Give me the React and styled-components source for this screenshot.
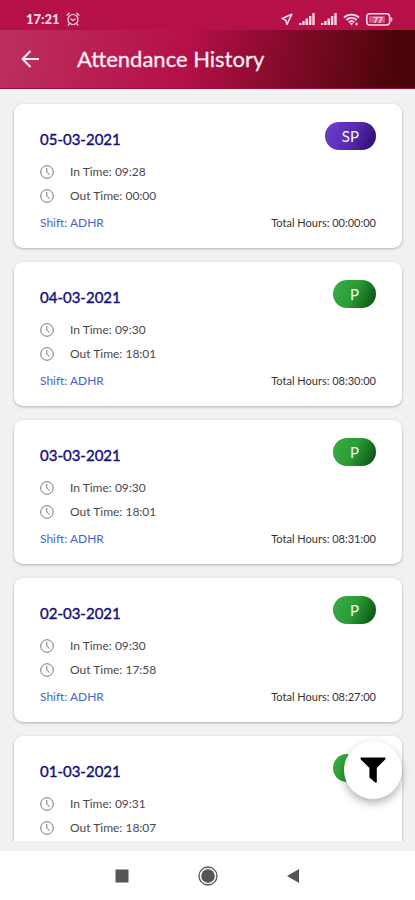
import React from "react";
import styled, { createGlobalStyle } from "styled-components";

const records = [
  { date: "05-03-2021", inTime: "09:28", outTime: "00:00", shift: "ADHR", total: "00:00:00", status: "SP" },
  { date: "04-03-2021", inTime: "09:30", outTime: "18:01", shift: "ADHR", total: "08:30:00", status: "P" },
  { date: "03-03-2021", inTime: "09:30", outTime: "18:01", shift: "ADHR", total: "08:31:00", status: "P" },
  { date: "02-03-2021", inTime: "09:30", outTime: "17:58", shift: "ADHR", total: "08:27:00", status: "P" },
  { date: "01-03-2021", inTime: "09:31", outTime: "18:07", status: "P" },
];

const badgeColors = {
  SP: "linear-gradient(115deg, #6f40cb 0%, #5a2cb4 50%, #2a0a68 100%)",
  P: "linear-gradient(115deg, #3aad45 0%, #2a9a35 50%, #07470f 100%)",
};

const GlobalStyle = createGlobalStyle`
  * {
    box-sizing: border-box;
  }

  body {
    margin: 0;
    font-family: Lato, "Open Sans", sans-serif;
    background: #f1f1f1;
  }
`;

const Screen = styled.div`
  display: flex;
  flex-direction: column;
  height: 100vh;
`;

const StatusBar = styled.div`
  display: flex;
  align-items: center;
  justify-content: space-between;
  height: 30px;
  padding: 8px 22px 0 26px;
  background: #b61049;
  color: #fbdce6;
`;

const StatusGroup = styled.div`
  display: flex;
  align-items: center;
  gap: 6px;
`;

const Clock = styled.span`
  font-size: 13px;
  font-weight: 900;
  line-height: 16px;
`;

const Header = styled.header`
  display: flex;
  align-items: center;
  gap: 35px;
  height: 59px;
  padding: 0 20px;
  border-bottom: 1px solid #9c0d3e;
  background: linear-gradient(100deg, #bd2f60 0%, #b51048 45%, #480406 96%);
`;

const BackButton = styled.button`
  display: flex;
  padding: 0;
  border: 0;
  background: none;
  color: #ffeef3;
`;

const Title = styled.h1`
  margin: 0;
  font-size: 22px;
  font-weight: 400;
  line-height: 28px;
  color: #ffeef3;
  -webkit-text-stroke: 0.3px #ffeef3;
`;

const Content = styled.main`
  position: relative;
  flex: 1;
  min-height: 0;
  padding-bottom: 10px;
`;

const List = styled.ul`
  display: flex;
  flex-direction: column;
  gap: 14px;
  height: 100%;
  margin: 0;
  padding: 15px 13px 0 14px;
  overflow-y: auto;
  scrollbar-width: none;
  list-style: none;
`;

const Card = styled.li`
  flex: none;
  padding: 18px 26px 15px;
  border-radius: 9px;
  background: #fff;
  box-shadow: 0 1px 3px rgba(0, 0, 0, 0.28);
`;

const CardHead = styled.div`
  display: flex;
  align-items: flex-end;
  justify-content: space-between;
  margin-bottom: 10px;
`;

const DateText = styled.h2`
  margin: 0;
  font-size: 15px;
  font-weight: 400;
  line-height: 22px;
  color: #15107a;
  -webkit-text-stroke: 0.4px #15107a;
`;

const Badge = styled.span`
  padding: 0 17px;
  border-radius: 14px;
  font-size: 15px;
  line-height: 28px;
  color: #eefbee;
  background: ${props => badgeColors[props.$status]};
`;

const TimeRow = styled.div`
  display: flex;
  align-items: center;
  gap: 16px;
  font-size: 12px;
  line-height: 24px;
  color: #4a4a4a;
`;

const CardFoot = styled.div`
  display: flex;
  align-items: center;
  justify-content: space-between;
  margin-top: 5px;
  line-height: 20px;
`;

const Shift = styled.span`
  font-size: 12px;
  color: #4a62cc;
`;

const Total = styled.span`
  font-size: 11px;
  color: #333;
`;

const FilterButton = styled.button`
  position: absolute;
  right: 13px;
  bottom: 52px;
  display: flex;
  align-items: center;
  justify-content: center;
  width: 58px;
  height: 58px;
  padding: 0;
  border: 0;
  border-radius: 50%;
  background: #fff;
  box-shadow: 0 4px 8px rgba(0, 0, 0, 0.3);
`;

const NavBar = styled.nav`
  display: flex;
  align-items: center;
  justify-content: center;
  gap: 64px;
  height: 49px;
  background: #fff;
`;

const NavButton = styled.button`
  display: flex;
  padding: 0;
  border: 0;
  background: none;
`;

const AlarmIcon = () => (
  <svg width="14" height="14" viewBox="0 0 14 14" fill="none" stroke="currentColor" strokeWidth="1.2" strokeLinecap="round">
    <circle cx="7" cy="7.5" r="5" />
    <path d="M5 7l2 1.6L9 7M1 3.2L3.2 1.2M13 3.2L10.8 1.2M3.2 11.8L2.2 13M10.8 11.8l1 1.2" />
  </svg>
);

const LocationIcon = () => (
  <svg width="13" height="13" viewBox="0 0 13 13" fill="none" stroke="currentColor" strokeWidth="1.6" strokeLinejoin="round">
    <path d="M11.8 1.2L2.2 5.4l3.6 1.9 1.2 4.2z" />
  </svg>
);

const SignalIcon = () => (
  <svg width="16" height="12" viewBox="0 0 16 12" fill="currentColor">
    <path d="M0 10h2.4v2H0zM3.2 8h2.5v4H3.2zM6.5 5.6H9V12H6.5zM9.9 3h2.5v9H9.9zM13.3 0h2.4v12h-2.4z" />
  </svg>
);

const WifiIcon = () => (
  <svg width="17" height="13" viewBox="0 0 17 13" fill="none" stroke="currentColor" strokeWidth="1.8">
    <path d="M1 4.6C5 .6 12 .6 16 4.6M3.4 7c2.8-2.8 7.4-2.8 10.2 0M5.7 9.3c1.6-1.5 4-1.5 5.6 0" />
    <path d="M6.8 10.4L8.5 12.4l1.7-2c-1-.8-2.4-.8-3.4 0z" fill="currentColor" stroke="none" />
    <path d="M13.5 9.5v3M12.2 11h2.8" strokeWidth="1" />
  </svg>
);

const BatteryIcon = () => (
  <svg width="27" height="13" viewBox="0 0 27 13">
    <rect x="0.8" y="0.8" width="22.8" height="11.2" rx="3" fill="none" stroke="currentColor" strokeWidth="1.6" />
    <rect x="3" y="3" width="16" height="6.8" rx="1" fill="currentColor" opacity="0.35" />
    <path d="M24.6 4c1.4.4 1.8 1.2 1.8 2.4s-.4 2-1.8 2.4z" fill="currentColor" />
    <text x="12" y="9.5" fontSize="8" fontWeight="900" textAnchor="middle" fill="currentColor">77</text>
  </svg>
);

const BackIcon = () => (
  <svg width="22" height="22" viewBox="0 0 22 22" fill="none" stroke="currentColor" strokeWidth="2" strokeLinejoin="round">
    <path d="M19 11H3M10.5 3L2.6 11l7.9 8" />
  </svg>
);

const ClockIcon = () => (
  <svg width="14" height="14" viewBox="0 0 14 14" fill="none" stroke="#777" strokeWidth="1">
    <circle cx="7" cy="7" r="6.3" />
    <path d="M6.8 3v4.2l2.8 2.4" />
  </svg>
);

const FilterIcon = () => (
  <svg width="26" height="26" viewBox="0 0 26 26">
    <path d="M.6.6h24.8v1.6L16.8 11v14.6h-1.6l-5.8-5V11L.6 2.2z" fill="#000" />
  </svg>
);

const AttendanceCard = ({ record }) => (
  <Card>
    <CardHead>
      <DateText>{record.date}</DateText>
      <Badge $status={record.status}>{record.status}</Badge>
    </CardHead>
    <TimeRow>
      <ClockIcon />
      <span>In Time: {record.inTime}</span>
    </TimeRow>
    <TimeRow>
      <ClockIcon />
      <span>Out Time: {record.outTime}</span>
    </TimeRow>
    {record.total && (
      <CardFoot>
        <Shift>Shift: {record.shift}</Shift>
        <Total>Total Hours: {record.total}</Total>
      </CardFoot>
    )}
  </Card>
);

const App = () => (
  <Screen>
    <GlobalStyle />
    <StatusBar>
      <StatusGroup>
        <Clock>17:21</Clock>
        <AlarmIcon />
      </StatusGroup>
      <StatusGroup>
        <LocationIcon />
        <SignalIcon />
        <SignalIcon />
        <WifiIcon />
        <BatteryIcon />
      </StatusGroup>
    </StatusBar>
    <Header>
      <BackButton aria-label="Back">
        <BackIcon />
      </BackButton>
      <Title>Attendance History</Title>
    </Header>
    <Content>
      <List>
        {records.map(record => (
          <AttendanceCard key={record.date} record={record} />
        ))}
      </List>
      <FilterButton aria-label="Filter">
        <FilterIcon />
      </FilterButton>
    </Content>
    <NavBar>
      <NavButton aria-label="Recent apps">
        <svg width="22" height="22" viewBox="0 0 22 22">
          <rect x="4.5" y="4.5" width="13" height="13" fill="#555" />
        </svg>
      </NavButton>
      <NavButton aria-label="Home">
        <svg width="22" height="22" viewBox="0 0 22 22">
          <circle cx="11" cy="11" r="9" fill="none" stroke="#555" strokeWidth="1.3" />
          <circle cx="11" cy="11" r="6.8" fill="#555" />
        </svg>
      </NavButton>
      <NavButton aria-label="Go back">
        <svg width="22" height="22" viewBox="0 0 22 22">
          <path d="M4 11l12-7v14z" fill="#555" />
        </svg>
      </NavButton>
    </NavBar>
  </Screen>
);

export default App;
